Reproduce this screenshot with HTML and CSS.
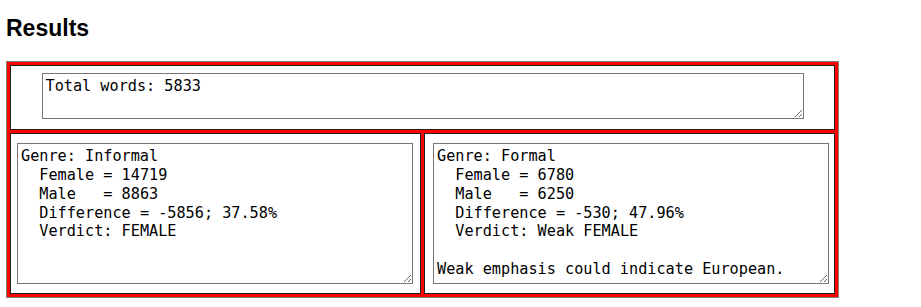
FILE: index.html
```html
<!DOCTYPE html>
<html lang="en">
<head>
	<meta charset="UTF-8">
	<title>Results</title>
	<link rel="stylesheet" href="styles.css">
</head>
<body>
	<div id="page">
		<h2>Results</h2>
		<table class="results">
			<tr>
				<td colspan="2" class="total">
					<textarea class="total-box" readonly>Total words: 5833</textarea>
				</td>
			</tr>
			<tr>
				<td class="genre">
					<textarea class="genre-box" readonly>Genre: Informal
  Female = 14719
  Male   = 8863
  Difference = -5856; 37.58%
  Verdict: FEMALE</textarea>
				</td>
				<td class="genre genre-right">
					<textarea class="genre-box" readonly>Genre: Formal
  Female = 6780
  Male   = 6250
  Difference = -530; 47.96%
  Verdict: Weak FEMALE

Weak emphasis could indicate European.</textarea>
				</td>
			</tr>
		</table>
	</div>
</body>
</html>
```

FILE: styles.css
```css
*{
	margin:0;
	padding:0;
}
body{
	background:#fff;
	font-family:"Liberation Sans", Arial, sans-serif;
}
#page{
	padding:15px 6px 0;
}
#page h2{
	font-size:23px;
	line-height:26px;
	font-weight:bold;
	color:#000;
	margin-bottom:20px;
}
.results{
	width:833px;
	table-layout:fixed;
	border:1px solid #808080;
	border-spacing:3px;
	background:#f00;
}
.results td{
	background:#fff;
	border:1px solid #222;
	vertical-align:top;
}
.results td.total{
	padding:7px 0 10px 0;
}
.results td.genre{
	padding:9px 0 9px 6px;
}
.results td.genre-right{
	padding-left:8px;
}
textarea{
	display:block;
	box-sizing:border-box;
	font-family:"DejaVu Sans Mono", "Liberation Mono", monospace;
	font-size:15.2px;
	line-height:18.85px;
	padding:3px 2px 2px 3px;
	border:1px solid #767676;
	color:#000;
	background:#fff;
	overflow:hidden;
}
.total-box{
	width:762px;
	height:46px;
	margin:0 auto;
}
.genre-box{
	width:396px;
	height:141px;
}
```
